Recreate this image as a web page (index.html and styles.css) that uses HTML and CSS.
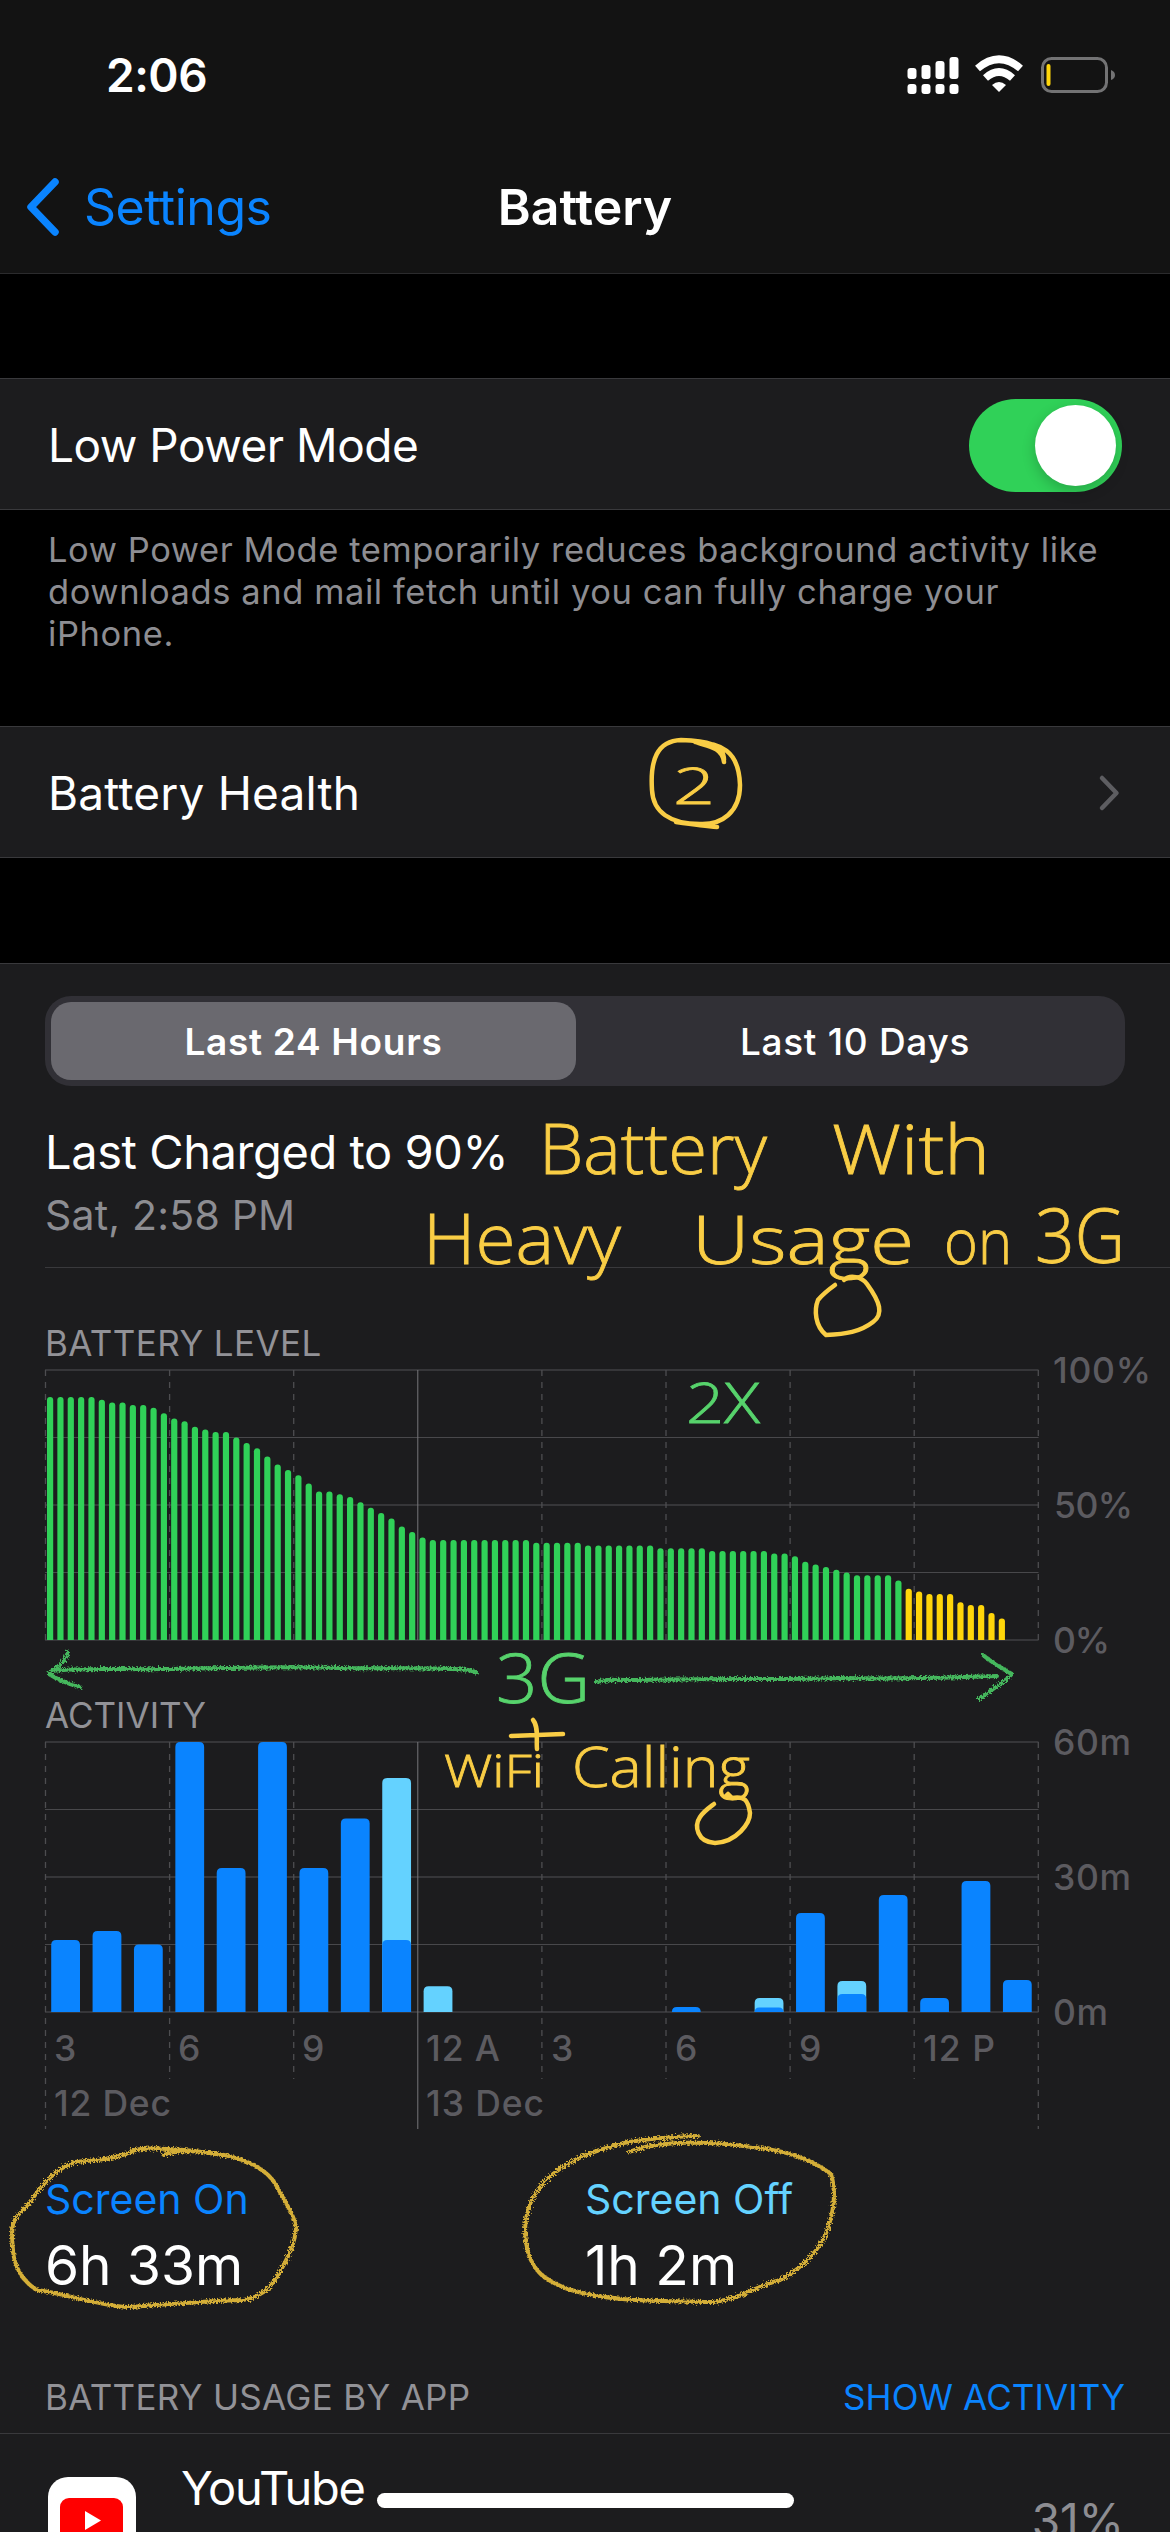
FILE: index.html
```html
<!DOCTYPE html>
<html lang="en">
<head>
    <meta charset="UTF-8">
    <title>Battery</title>
    <link rel="stylesheet" href="styles.css">
</head>
<body>
<div id="phone">
    <header class="header">
        <div class="status">
            <span class="time">2:06</span>
            <svg class="status-icons" width="210" height="44" viewBox="0 0 210 44">
                <g fill="#fff">
                    <rect x="1.5" y="15" width="9" height="11" rx="3"/>
                    <rect x="15.500" y="12" width="9" height="14" rx="3"/>
                    <rect x="29.500" y="8" width="9" height="18" rx="3"/>
                    <rect x="43.500" y="4" width="9" height="22" rx="3"/>
                    <rect x="1.5" y="31" width="9" height="10" rx="3"/>
                    <rect x="15.500" y="31" width="9" height="10" rx="3"/>
                    <rect x="29.500" y="31" width="9" height="10" rx="3"/>
                    <rect x="43.500" y="31" width="9" height="10" rx="3"/>
                    <path d="M93 39 L86 32 Q93 26 100 32 Z"/>
                </g>
                <g fill="none" stroke="#fff" stroke-width="7.500">
                    <path d="M71.500 15.500 Q93 -3 114.500 15.500"/>
                    <path d="M79.500 25 Q93 13 106.500 25"/>
                </g>
                <rect x="136.500" y="5.500" width="64" height="33" rx="9" fill="none" stroke="#737374" stroke-width="3"/>
                <path d="M205 17 Q209 18.500 209 22 Q209 25.500 205 27 Z" fill="#737374"/>
                <rect x="140.500" y="11" width="4" height="22" rx="2" fill="#ffd60a"/>
            </svg>
        </div>
        <nav class="nav">
            <a class="back">
                <svg width="36" height="60" viewBox="0 0 36 60"><path d="M31 5 L7 30 L31 55" fill="none" stroke="#0a84ff" stroke-width="7.500" stroke-linecap="round" stroke-linejoin="round"/></svg>
                <span>Settings</span>
            </a>
            <h1>Battery</h1>
        </nav>
    </header>

    <section class="group power">
        <span class="label">Low Power Mode</span>
        <span class="toggle"><i></i></span>
    </section>
    <p class="note">Low Power Mode temporarily reduces background activity like<br>downloads and mail fetch until you can fully charge your<br>iPhone.</p>

    <section class="group health">
        <span class="label">Battery Health</span>
        <svg class="chevron" width="24" height="38" viewBox="0 0 24 38"><path d="M4 4 L18.500 19 L4 34" fill="none" stroke="#5d5d61" stroke-width="4.500" stroke-linecap="round" stroke-linejoin="round"/></svg>
    </section>

    <section class="usage">
        <div class="tabs">
            <span class="tab active">Last 24 Hours</span>
            <span class="tab">Last 10 Days</span>
        </div>
        <div class="charged">
            <div class="charged-title">Last Charged to 90%</div>
            <div class="charged-date">Sat, 2:58 PM</div>
        </div>
        <h2 class="level-title"><span>BATTERY LEVEL</span></h2>
        <svg id="level" class="chart" width="1170" height="330" viewBox="0 1364 1170 330"></svg>
        <h2 class="activity-title"><span>ACTIVITY</span></h2>
        <svg id="activity" class="chart" width="1170" height="438" viewBox="0 1736 1170 438"></svg>
        <div class="totals">
            <div class="total">
                <div class="total-name on">Screen On</div>
                <div class="total-time">6h 33m</div>
            </div>
            <div class="total">
                <div class="total-name off">Screen Off</div>
                <div class="total-time">1h 2m</div>
            </div>
        </div>
        <div class="apps-head">
            <span class="apps-title">BATTERY USAGE BY APP</span>
            <a class="show">SHOW ACTIVITY</a>
        </div>
        <div class="app">
            <svg class="app-icon" width="88" height="88" viewBox="0 0 88 88">
                <rect width="88" height="88" rx="20" fill="#fff"/>
                <rect x="12" y="21" width="63" height="46" rx="9" fill="#f00"/>
                <path d="M37 34 L53 43.500 L37 53 Z" fill="#fff"/>
            </svg>
            <span class="app-name">YouTube</span>
            <span class="app-share">31%</span>
        </div>
    </section>

    <!-- pen notes drawn over the page -->
    <svg class="ink" width="1170" height="2532" viewBox="0 0 1170 2532">
        <defs>
            <filter id="crayon" x="-5%" y="-20%" width="110%" height="140%">
                <feTurbulence type="fractalNoise" baseFrequency="0.6" numOctaves="2" result="n"/>
                <feDisplacementMap in="SourceGraphic" in2="n" scale="6"/>
            </filter>
        </defs>
        <g class="pen yellow">
            <path d="M724 762 C722 746 705 746 695 742 M695 742 C720 743 739 750 740 785 C740 812 722 825 700 824 C670 824 653 812 652 790 C650 760 657 741 681 740 C706 741 724 744 724 760 M676 822 C690 824 704 826 717 827"/>
            <path d="M844 1280 C850 1274 862 1277 867 1284 C880 1302 884 1314 873 1322 C860 1332 846 1334 826 1335 C815 1326 814 1310 818 1300 C823 1294 828 1290 835 1285"/>
            <path d="M533 1720 C539 1727 536 1740 537 1749 M511 1736 L563 1734"/>
            <path d="M725 1797 L728 1794 L732 1798 C745 1796 748 1800 750 1813 C750 1823 737 1842 715 1843 C697 1842 694 1826 700 1817 C704 1811 710 1807 714 1804"/>
        </g>
        <g class="crayon yellow">
            <path d="M164 2155 C175 2149 202 2151 224 2155 C250 2160 269 2172 276 2185 C285 2202 295 2216 296 2228 C295 2246 287 2258 280 2272 C269 2291 260 2297 243 2300 C200 2301 160 2305 127 2307 C95 2305 63 2293 37 2290 C22 2281 14 2266 13 2250 C11 2230 12 2222 18 2215 C34 2202 43 2174 75 2162 C100 2160 120 2158 135 2150 C158 2146 190 2150 222 2155"/>
            <path d="M698 2136 C665 2137 629 2140 610 2147 C575 2156 552 2172 540 2187 C525 2206 522 2230 528 2252 C534 2273 546 2280 565 2288 C605 2302 660 2301 713 2302 C742 2299 756 2286 780 2280 C801 2269 821 2250 828 2228 C834 2210 836 2190 831 2174 C810 2158 782 2150 752 2147 C710 2141 658 2140 629 2152"/>
        </g>
        <g class="crayon green">
            <path d="M68 1652 C66 1662 55 1668 49 1674 C58 1680 69 1684 80 1687 M52 1671 C80 1667 130 1670 160 1669 C220 1668 290 1666 340 1668 C390 1669 440 1667 468 1670 L476 1672"/>
            <path d="M596 1682 C605 1679 615 1680 640 1680 C720 1678 780 1680 838 1678 C890 1679 950 1678 997 1676 M983 1655 C992 1663 1002 1668 1012 1674 C1003 1684 990 1690 979 1699"/>
        </g>
        <g class="hand yellow">
            <text x="673" y="804" font-size="49" textLength="42" lengthAdjust="spacingAndGlyphs">2</text>
            <text x="539" y="1174" font-size="70" textLength="228" lengthAdjust="spacingAndGlyphs">Battery</text>
            <text x="832" y="1174" font-size="68" textLength="158" lengthAdjust="spacingAndGlyphs">With</text>
            <text x="423" y="1264" font-size="70" textLength="198" lengthAdjust="spacingAndGlyphs">Heavy</text>
            <text x="692" y="1264" font-size="66" textLength="222" lengthAdjust="spacingAndGlyphs">Usage</text>
            <text x="944" y="1264" font-size="62" textLength="68" lengthAdjust="spacingAndGlyphs">on</text>
            <text x="1035" y="1263" font-size="76" textLength="90" lengthAdjust="spacingAndGlyphs">3G</text>
            <text x="444" y="1787" font-size="45" textLength="100" lengthAdjust="spacingAndGlyphs">WiFi</text>
            <text x="572" y="1787" font-size="56" textLength="178" lengthAdjust="spacingAndGlyphs">Calling</text>
        </g>
        <g class="hand green">
            <text x="686" y="1423" font-size="56" textLength="74" lengthAdjust="spacingAndGlyphs">2X</text>
            <text x="496" y="1703" font-size="68" textLength="94" lengthAdjust="spacingAndGlyphs">3G</text>
        </g>
    </svg>
    <div class="home"></div>
</div>
<script src="script.js"></script>
</body>
</html>
```
FILE: styles.css
```css
*{
    margin: 0;
    padding: 0;
    box-sizing: border-box;
}
body{
    background: #000;
    color: #fff;
    font-family: Inter, "Liberation Sans", sans-serif;
}
#phone{
    position: relative;
    width: 1170px;
    height: 2532px;
    overflow: hidden;
}
.header{
    height: 274px;
    background: #131313;
    border-bottom: 1px solid #2b2b2d;
}
.status{
    height: 149px;
    padding: 0 54px 0 106px;
    display: flex;
    align-items: center;
    justify-content: space-between;
}
.time{
    font-size: 46px;
    font-weight: 600;
    letter-spacing: -0.5px;
}
.nav{
    height: 116px;
    padding: 0 24px;
    display: grid;
    grid-template-columns: 1fr auto 1fr;
    align-items: center;
}
.back{
    display: flex;
    align-items: center;
    gap: 24px;
    color: #0a84ff;
    font-size: 50px;
    letter-spacing: -0.5px;
}
.nav h1{
    font-size: 50px;
    font-weight: 600;
}
.group{
    height: 132px;
    padding: 2px 48px 0;
    background: #1c1c1e;
    border-top: 1px solid #39393c;
    border-bottom: 1px solid #39393c;
    display: flex;
    align-items: center;
    justify-content: space-between;
}
.power{
    margin-top: 104px;
}
.label{
    font-size: 46px;
    letter-spacing: -0.5px;
}
.health .label{
    letter-spacing: 0.2px;
}
.toggle{
    width: 153px;
    height: 93px;
    padding: 6px;
    border-radius: 47px;
    background: #30d158;
    display: flex;
    justify-content: flex-end;
}
.toggle i{
    width: 81px;
    height: 81px;
    border-radius: 50%;
    background: #fff;
    box-shadow: 0 5px 14px rgba(0,0,0,0.2);
}
.note{
    height: 216px;
    padding: 19px 48px 0;
    color: #8d8d92;
    font-size: 34.5px;
    line-height: 42px;
    letter-spacing: 0.57px;
    white-space: nowrap;
}
.usage{
    height: 1569px;
    margin-top: 105px;
    padding-top: 32px;
    background: #1c1c1e;
    border-top: 1px solid #39393c;
}
.tabs{
    width: 1080px;
    height: 90px;
    margin-left: 45px;
    padding: 6px;
    border-radius: 26px;
    background: #313036;
    display: flex;
}
.tab{
    flex: 1;
    padding-left: 15px;
    border-radius: 20px;
    text-align: center;
    line-height: 79px;
    font-size: 37px;
    font-weight: 500;
    letter-spacing: 0.7px;
}
.tab.active{
    flex: none;
    width: 525px;
    padding-left: 0;
    background: #6a696f;
    font-weight: 600;
}
.charged{
    height: 182px;
    margin-left: 45px;
    padding-top: 37px;
    border-bottom: 1px solid #39393c;
}
.charged-title{
    font-size: 47px;
    line-height: 58px;
    letter-spacing: -0.42px;
}
.charged-date{
    margin-top: 9px;
    color: #8d8d92;
    font-size: 41px;
    line-height: 50px;
    letter-spacing: 0.2px;
}
h2{
    height: 42px;
    margin-left: 45px;
    color: #929297;
    font-size: 35px;
    font-weight: 400;
    line-height: 42px;
}
.level-title{
    margin-top: 54px;
    letter-spacing: 0.4px;
}
.chart{
    display: block;
    overflow: visible;
}
.chart text{
    fill: #5c5b60;
    font-size: 35.5px;
    font-weight: 500;
}
.totals{
    height: 202px;
    padding-left: 45px;
    display: grid;
    grid-template-columns: 540px 1fr;
}
.total-name{
    font-size: 41px;
    line-height: 50px;
}
.on{
    color: #0a84ff;
}
.off{
    color: #64d2ff;
}
.total-time{
    margin-top: 6px;
    font-size: 55px;
    line-height: 70px;
}
.apps-head{
    height: 58px;
    padding: 0 45px;
    border-bottom: 1px solid #39393c;
    display: flex;
    justify-content: space-between;
    font-size: 35px;
    line-height: 42px;
    letter-spacing: 0.3px;
    color: #929297;
}
.show{
    color: #0a84ff;
    letter-spacing: 0.1px;
}
.app{
    height: 98px;
    padding: 0 46px 0 48px;
    display: flex;
}
.app-icon{
    margin-top: 43px;
    flex: none;
}
.app-name{
    margin-left: 45px;
    padding-top: 25px;
    font-size: 47px;
    line-height: 58px;
    letter-spacing: -1.3px;
}
.app-share{
    margin-left: auto;
    padding-top: 57px;
    color: #8d8d92;
    font-size: 46px;
    line-height: 58px;
}
.home{
    position: absolute;
    left: 377px;
    top: 2493px;
    width: 417px;
    height: 15px;
    border-radius: 8px;
    background: #fff;
}
.ink{
    position: absolute;
    left: 0;
    top: 0;
}
.pen, .crayon{
    fill: none;
    stroke-width: 4.5;
    stroke-linecap: round;
    stroke-linejoin: round;
}
.pen.yellow{
    stroke: #f9cd45;
}
.crayon{
    stroke-width: 4;
    filter: url(#crayon);
}
.crayon.yellow{
    stroke: #d4ae37;
}
.crayon.green{
    stroke: #45b75d;
}
.hand{
    font-family: "Open Sans", Lato, sans-serif;
    font-weight: 300;
    stroke-width: 0.8;
}
.hand.yellow{
    fill: #f9cd45;
    stroke: #f9cd45;
}
.hand.green{
    fill: #57d36c;
    stroke: #57d36c;
}
```
FILE: script.js
```js
var LEFT = 45.5;
var STEP = 124.1;

// battery level in percent, one bar every 15 minutes
var levels = [
    90,90,90,90,90,89,88,88,87,87,86,84,82,81,79,78,77,77,75,73,71,68,65,63,
    61,58,55,55,54,53,51,49,47,45,42,40,38,37,37,37,37,37,37,37,37,37,37,36,
    36,36,36,36,35,35,35,35,35,35,35,34,34,34,34,34,33,33,33,33,33,33,32,32,
    31,29,28,27,26,25,24,24,24,24,22,19,18,17,17,17,14,13,13,10,8
];

// [hour slot, total minutes, screen on minutes]
var hours = [
    [0,16,16],[1,18,18],[2,15,15],[3,60,60],[4,32,32],[5,60,60],[6,32,32],
    [7,43,43],[8,52,16],[9,5.7,0],[15,1.1,1.1],[17,3.1,1],[18,22,22],
    [19,6.9,4],[20,26,26],[21,3.1,3.1],[22,29.1,29.1],[23,7.1,7.1]
];

function line(x1, y1, x2, y2, color, w, dash) {
    return '<line x1="' + x1 + '" y1="' + y1 + '" x2="' + x2 + '" y2="' + y2 +
        '" stroke="' + color + '" stroke-width="' + w + '"' +
        (dash ? ' stroke-dasharray="6 6"' : '') + '/>';
}

function label(x, y, w, t) {
    return '<text x="' + x + '" y="' + y + '" textLength="' + w + '">' + t + '</text>';
}

function bar(x, w, bottom, h, r, color) {
    r = Math.min(r, h);
    return '<path d="M' + x + ' ' + bottom + 'v' + (r - h) + 'q0 ' + (-r) + ' ' + r + ' ' + (-r) +
        'h' + (w - 2 * r) + 'q' + r + ' 0 ' + r + ' ' + r + 'v' + (h - r) + 'z" fill="' + color + '"/>';
}

function grid(top, long, short) {
    var s = '';
    for (var i = 0; i < 5; i++) {
        s += line(45, top + i * 67.5, 1038.5, top + i * 67.5, i % 2 ? '#48484b' : '#363639', i % 2 ? 1 : 2);
    }
    for (var j = 0; j < 9; j++) {
        var x = LEFT + j * STEP;
        var end = (j == 0 || j == 3 || j == 8) ? long : short;
        s += line(x, top, x, end, j == 3 ? '#77777a' : '#4d4d50', j == 3 ? 1 : 1.3, j != 3);
    }
    return s;
}

var out = grid(1370, 1640, 1640);
for (var i = 0; i < levels.length; i++) {
    out += bar(47 + i * 10.345, 6.2, 1640, levels[i] * 2.7, 3, i < 83 ? '#30d158' : '#ffd60a');
}
out += label(1053, 1383, 98, '100%') + label(1054, 1518, 79, '50%') + label(1053, 1653, 57, '0%');
document.getElementById('level').innerHTML = out;

out = grid(1742, 2129, 2079);
for (i = 0; i < hours.length; i++) {
    var x = 51.2 + hours[i][0] * 41.38;
    out += bar(x, 28.8, 2012, hours[i][1] * 4.5, 5, hours[i][1] == hours[i][2] ? '#0a84ff' : '#64d2ff');
    if (hours[i][2] && hours[i][1] != hours[i][2]) {
        out += bar(x, 28.8, 2012, hours[i][2] * 4.5, 5, '#0a84ff');
    }
}
out += label(1053, 1755, 78, '60m') + label(1053, 1890, 78, '30m') + label(1053, 2025, 55, '0m');
out += label(54, 2061, 22, '3') + label(178, 2061, 23, '6') + label(302, 2061, 23, '9') + label(426, 2061, 74, '12 A');
out += label(551, 2061, 22, '3') + label(675, 2061, 23, '6') + label(799, 2061, 23, '9') + label(923, 2061, 72, '12 P');
out += label(54, 2116, 117, '12 Dec') + label(426, 2116, 118, '13 Dec');
document.getElementById('activity').innerHTML = out;
```
